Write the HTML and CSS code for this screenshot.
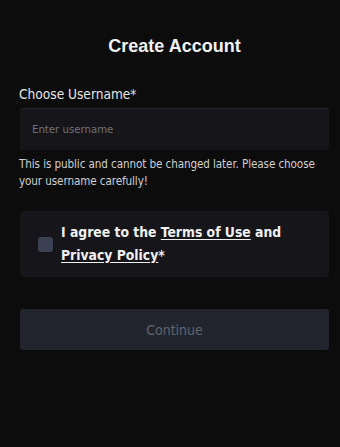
FILE: index.html
```html
<!DOCTYPE html>
<html>
<head>
<meta charset="utf-8">
<link rel="stylesheet" href="styles.css">
</head>
<body>
<main class="page">
  <h1 class="title">Create Account</h1>
  <label class="label" for="username">Choose Username*</label>
  <div class="input-box"><input id="username" class="input" type="text" placeholder="Enter username"></div>
  <p class="help">This is public and cannot be changed later. Please choose your username carefully!</p>
  <div class="agree">
    <span class="checkbox"></span>
    <p class="agree-text">I agree to the <a class="link">Terms of Use</a> and <a class="link">Privacy Policy</a>*</p>
  </div>
  <button class="btn" type="button">Continue</button>
</main>
</body>
</html>
```
FILE: styles.css
```css
html, body {
  margin: 0;
  padding: 0;
  background: #0c0c0d;
  height: 100%;
}
body {
  font-family: "DejaVu Sans Condensed", "Liberation Sans", sans-serif;
  color: #ececec;
}
.page {
  padding: 34px 11px 0 20px;
  display: flex;
  flex-direction: column;
}
.title {
  margin: 0 0 27px;
  text-align: center;
  font-family: "Liberation Sans", sans-serif;
  font-size: 18px;
  font-weight: 700;
  line-height: 24px;
  color: #f2f2f2;
}
.label {
  font-size: 13.6px;
  line-height: 18px;
  color: #e6e6e6;
  margin-bottom: 5px;
  margin-left: -1px;
}
.input-box {
  height: 42px;
  background: #15151a;
  border-radius: 3px;
  border-top: 1px solid #24242b;
  box-sizing: border-box;
  display: flex;
  align-items: center;
}
.input {
  flex: 1;
  background: transparent;
  border: 0;
  outline: none;
  padding: 0 12px;
  font-family: inherit;
  font-size: 11.3px;
  color: #ddd;
}
.input::placeholder { color: #6f727b; }
.help {
  margin: 6px 0 0 -1px;
  font-size: 11.6px;
  letter-spacing: -0.1px;
  line-height: 17px;
  color: #cfcfcf;
}
.agree {
  margin-top: 21px;
  background: #15151a;
  border-radius: 4px;
  height: 66px;
  display: flex;
  align-items: center;
  padding-left: 18px;
  box-sizing: border-box;
}
.checkbox {
  width: 15px;
  height: 15px;
  border-radius: 3px;
  background: #3b4150;
  flex: none;
  margin-right: 8px;
}
.agree-text {
  margin: 0;
  font-size: 13.8px;
  font-weight: 700;
  line-height: 23px;
  color: #f0f0f0;
}
.link {
  text-decoration: underline;
  text-underline-offset: 2px;
  color: #f0f0f0;
}
.btn {
  margin-top: 32px;
  height: 41px;
  border: 0;
  border-radius: 3px;
  background: #22252e;
  color: #5f6570;
  font-family: inherit;
  font-size: 14px;
}
```
